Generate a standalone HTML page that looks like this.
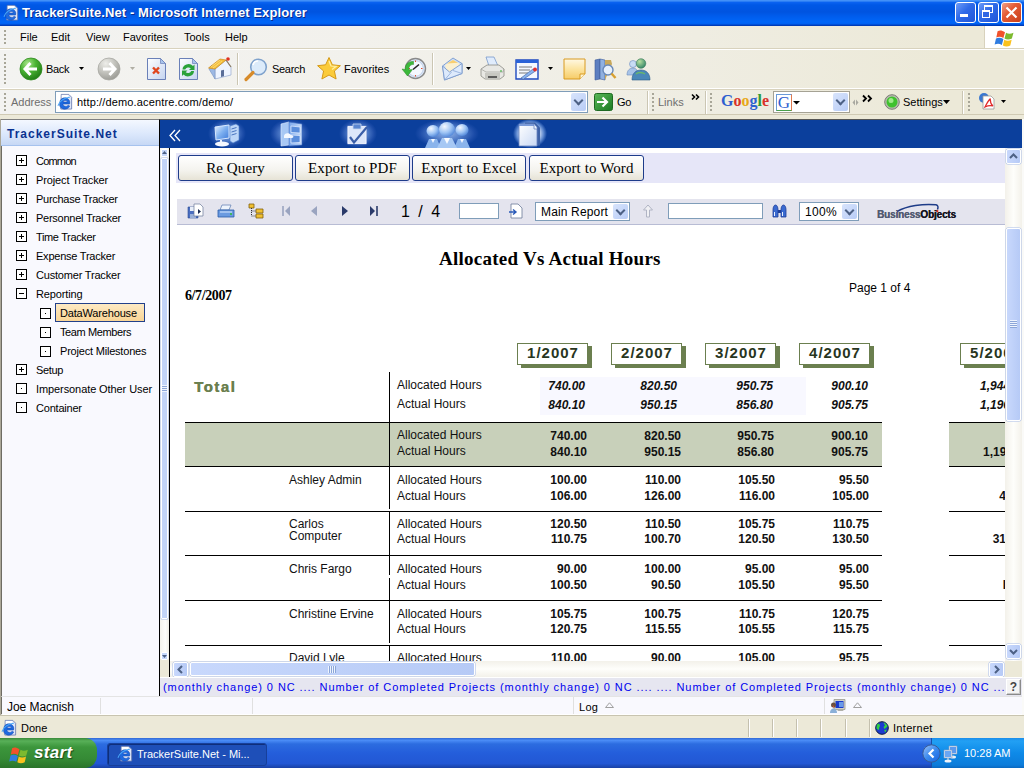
<!DOCTYPE html>
<html><head><meta charset="utf-8">
<style>
*{margin:0;padding:0;box-sizing:border-box}
html,body{width:1024px;height:768px;overflow:hidden;background:#ECE9D8;font-family:"Liberation Sans",sans-serif;font-size:11px;color:#000}
.a{position:absolute;white-space:nowrap}
svg.a{overflow:visible}
.t11{font-size:11px;line-height:13px}
#title{left:0;top:0;width:1024px;height:26px;background:linear-gradient(#4A96FA 0px,#3A8AF6 1px,#0A62F0 2.5px,#0058E6 5px,#0054E0 12px,#005CEC 16px,#0066F8 22px,#0060F0 24px,#0040C0 25px,#0038B0 26px)}
.xpb{width:21px;height:21px;border:1px solid #fff;border-radius:3px;background:linear-gradient(135deg,#6E9CF8,#2F6AE8 45%,#1F55D8)}
#menu{left:0;top:26px;width:1024px;height:23px;background:linear-gradient(90deg,#F3F3F1 0%,#F2F1EC 35%,#EFEDE2 68%,#ECE9D8 92%);border-bottom:1px solid #D8D2BD}
#tools{left:0;top:49px;width:1024px;height:40px;background:linear-gradient(90deg,#F3F3F1 0%,#F2F1EC 35%,#EFEDE2 68%,#ECE9D8 92%);border-top:1px solid #fff;border-bottom:1px solid #fff}
#addr{left:0;top:89px;width:1024px;height:26px;background:linear-gradient(90deg,#F3F3F1 0%,#F2F1EC 35%,#EFEDE2 68%,#ECE9D8 92%);border-top:1px solid #D8D2BD;border-bottom:1px solid #D0CAB4}
#leftp{left:0;top:119px;width:160px;height:578px;background:#F9F9FE;border-left:2px solid #6E6C64;box-shadow:inset 1px 0 0 #F9F9FE;border-top:1px solid #808080;border-right:1px solid #000}
#lhead{left:1px;top:120px;width:158px;height:26px;background:linear-gradient(#F4F8FF,#DCE8FC 55%,#C7D8F5);border-bottom:1px solid #A6C2EE}
#nav{left:160px;top:119px;width:862px;height:29px;background:#0B3F9C;border-top:1px solid #555}
#frame{left:160px;top:148px;width:862px;height:529px;background:#fff}
.grip{width:2px;background:repeating-linear-gradient(#A8A698 0 2px,transparent 2px 4px)}
.sep{width:2px;border-left:1px solid #CBC6B3;border-right:1px solid #fff}
.vsep{width:2px;height:18px;border-left:1px solid #C4C0AE;border-right:1px solid #fff}
.ddb{width:15px;height:18px;border-radius:2px;background:linear-gradient(135deg,#D8E4FC,#B8CCF6)}
.ddb:after{content:"";position:absolute;left:4px;top:50%;margin-top:-5px;width:5px;height:5px;border-right:2px solid #4D6185;border-bottom:2px solid #4D6185;transform:rotate(45deg)}
.tb{width:11px;height:11px;border:1px solid #000;background:#fff}
.tb.p:before{content:"";position:absolute;left:2px;top:4px;width:5px;height:1px;background:#000}
.tb.p:after{content:"";position:absolute;left:4px;top:2px;width:1px;height:5px;background:#000}
.tb.m:before{content:"";position:absolute;left:2px;top:4px;width:5px;height:1px;background:#000}
.tb.d:before{content:"";position:absolute;left:4px;top:4px;width:1px;height:1px;background:#000}
.glow{background:radial-gradient(closest-side,rgba(170,200,245,.85) 0%,rgba(110,150,220,.6) 55%,rgba(60,100,190,.35) 85%,rgba(11,63,158,0) 100%)}
.btn{height:26px;border:1px solid #1E3C8A;border-radius:3px;background:linear-gradient(#FFFFFF,#F4F3EE 60%,#E6E3D6);font-family:"Liberation Serif",serif;font-size:15px;line-height:24px;letter-spacing:.1px;text-align:center;color:#000}
.sbb{border-radius:2px;background:linear-gradient(90deg,#C8D8FC,#B6CAF6);border:1px solid #fff;box-shadow:0 0 0 .5px #A8BCE8}
.hb{width:71px;height:22px;background:#fff;border:1px solid #6B7F4F;font-weight:bold;font-size:15px;line-height:18px;text-align:center;letter-spacing:1px;text-indent:1px;color:#28361E}
.rl{font-size:12px;line-height:14px;color:#111}
.rv{width:80px;text-align:right;font-weight:bold;font-size:12px;line-height:14px;color:#111}
.it{font-style:italic}
</style></head><body>
<svg width="0" height="0" style="position:absolute"><defs>
<symbol id="ie" viewBox="0 0 18 18"><path d="M4.5 1.5h8l3 3v12.5h-11.5z" fill="#DDE6F8" stroke="#6A7CB0" stroke-width=".9"/><path d="M5 2h7v3H5z" fill="#fff"/><path d="M3 10.5a5.3 5 0 1 1 10.3 1.2H6.2a3 2.6 0 0 0 5.6 1.2l1.7.9A5.3 4.8 0 0 1 3 10.5zM6.3 9.6h4.8a2.5 2.2 0 0 0-4.8 0z" fill="#1E6AE0" stroke="#0E3FA8" stroke-width=".5"/><path d="M1 13.5C2.5 9 7 5.5 13.5 4.5" fill="none" stroke="#4AA8F8" stroke-width="1.1"/></symbol>
</defs></svg>
<!-- Title bar -->
<div class="a" id="title"></div>
<svg class="a" style="left:3px;top:4px" width="17" height="17"><use href="#ie"/></svg>
<div class="a" style="left:22px;top:5px;font-weight:bold;font-size:13px;letter-spacing:.1px;color:#fff;text-shadow:1px 1px 0 #0A2A8C">TrackerSuite.Net - Microsoft Internet Explorer</div>
<div class="a xpb" style="left:955px;top:2px"><div style="position:absolute;left:4px;top:11px;width:8px;height:3px;background:#fff"></div></div>
<div class="a xpb" style="left:978px;top:2px"><div style="position:absolute;left:5px;top:2px;width:9px;height:8px;border:1px solid #fff;border-top-width:2px"></div><div style="position:absolute;left:3px;top:7px;width:8px;height:8px;border:1px solid #fff;border-top-width:2px;background:#2F66E4"></div></div>
<div class="a xpb" style="left:1001px;top:2px;background:linear-gradient(135deg,#F0A088,#E45C36 40%,#C9401C)"><svg style="position:absolute;left:0;top:0" width="21" height="21"><path d="M4.5 4.5l10 10M14.5 4.5l-10 10" stroke="#fff" stroke-width="2.2"/></svg></div>

<!-- Menu -->
<div class="a" id="menu"></div>
<div class="a grip" style="left:4px;top:30px;height:16px"></div>
<div class="a t11" style="left:20px;top:31px">File</div>
<div class="a t11" style="left:51px;top:31px">Edit</div>
<div class="a t11" style="left:86px;top:31px">View</div>
<div class="a t11" style="left:123px;top:31px">Favorites</div>
<div class="a t11" style="left:184px;top:31px">Tools</div>
<div class="a t11" style="left:225px;top:31px">Help</div>
<div class="a" style="left:984px;top:26px;width:40px;height:22px;background:#fff;border-left:1px solid #D8D2BD"></div>
<svg class="a" style="left:995px;top:28px" width="20" height="18" viewBox="0 0 18 17"><path d="M2 3c2-1 4-1 7 1l-1.5 5.5C5 8 3 8 .8 9z" fill="#F1522B"/><path d="M10 4.5c2 1.3 4.5 1.3 7 0l-1.5 5.5c-2.4 1.2-4.8 1.2-7 0z" fill="#7DBA2F"/><path d="M.5 10c2-1 4.5-1 7 .5L6 16c-2.2-1.4-4.3-1.4-6.8-.4z" fill="#2F7CE0"/><path d="M8.3 11c2 1.3 4.5 1.3 7 0L14 16.5c-2.4 1.2-4.8 1.2-7 0z" fill="#FBC21E"/></svg>

<!-- Standard toolbar -->
<div class="a" id="tools"></div>
<div class="a grip" style="left:4px;top:54px;height:32px"></div>
<svg class="a" style="left:19px;top:57px" width="24" height="24" viewBox="0 0 24 24"><defs><radialGradient id="gb" cx="35%" cy="25%" r="80%"><stop offset="0" stop-color="#A8E48A"/><stop offset=".45" stop-color="#4CB534"/><stop offset="1" stop-color="#1F7A14"/></radialGradient></defs><circle cx="12" cy="12" r="11" fill="url(#gb)" stroke="#2E8A1E" stroke-width=".8"/><path d="M11.5 6L6 12l5.5 6M6.5 12H18" fill="none" stroke="#fff" stroke-width="3" stroke-linejoin="miter"/></svg>
<div class="a t11" style="left:46px;top:63px;letter-spacing:-.3px">Back</div>
<svg class="a" style="left:79px;top:67px" width="6" height="4"><path d="M0 0h5L2.5 3z" fill="#000"/></svg>
<svg class="a" style="left:97px;top:57px" width="24" height="24" viewBox="0 0 24 24"><defs><radialGradient id="gg" cx="35%" cy="25%" r="80%"><stop offset="0" stop-color="#EEEEEA"/><stop offset=".5" stop-color="#C4C4BE"/><stop offset="1" stop-color="#9A9A94"/></radialGradient></defs><circle cx="12" cy="12" r="11" fill="url(#gg)" stroke="#A8A8A2" stroke-width=".8"/><path d="M12.5 6L18 12l-5.5 6M17.5 12H6" fill="none" stroke="#fff" stroke-width="3"/></svg>
<svg class="a" style="left:130px;top:67px" width="6" height="4"><path d="M0 0h5L2.5 3z" fill="#B0AEA4"/></svg>
<svg class="a" style="left:146px;top:57px" width="21" height="24" viewBox="0 0 21 24"><defs><linearGradient id="pg" x1="0" y1="0" x2="1" y2="1"><stop offset="0" stop-color="#FFFFFF"/><stop offset="1" stop-color="#C4D4F0"/></linearGradient></defs><path d="M1.5 1.5h13l5 5v16h-18z" fill="url(#pg)" stroke="#6A80B8"/><path d="M14.5 1.5v5h5z" fill="#A8C4EC" stroke="#6A80B8" stroke-width=".7"/><path d="M7 10.5l6 6M13 10.5l-6 6" stroke="#E0461E" stroke-width="2.4"/></svg>
<svg class="a" style="left:178px;top:57px" width="21" height="24" viewBox="0 0 21 24"><path d="M1.5 1.5h13l5 5v16h-18z" fill="url(#pg)" stroke="#6A80B8"/><path d="M14.5 1.5v5h5z" fill="#A8C4EC" stroke="#6A80B8" stroke-width=".7"/><path d="M4.5 12.5a6 5.5 0 0 1 10.5-3.5l1.5-1.5v5.5h-5.5l1.8-1.8a3.5 3.2 0 0 0-5.6 1.3z" fill="#2AA23A"/><path d="M16 14a6 5.5 0 0 1-10.5 3.5L4 19v-5.5h5.5l-1.8 1.8a3.5 3.2 0 0 0 5.6-1.3z" fill="#2AA23A"/></svg>
<svg class="a" style="left:208px;top:56px" width="25" height="25" viewBox="0 0 25 25"><path d="M1 13l6 10 16-4v-8l-5-7z" fill="#C8D8F4"/><path d="M7 23V13l11-9 5 7v8z" fill="#EEF4FF" stroke="#8AA0C8" stroke-width=".6"/><path d="M1 13l6 10V13L4 9z" fill="#9CB8E4" stroke="#7A94C0" stroke-width=".6"/><path d="M0.5 12L12 3l6 1L7 13z" fill="#F4C040" stroke="#D08A18" stroke-width=".7"/><path d="M3 11l9-7M5 12l9-7" stroke="#FFE48A" stroke-width=".7"/><path d="M18 4l5 7" stroke="#8A7A60" stroke-width="1.2"/><path d="M13 14.5l3-.8v6.5l-3 .8z" fill="#5A6E98"/><circle cx="20" cy="3" r="1.8" fill="#E0301E"/></svg>
<div class="a sep" style="left:237px;top:53px;height:32px"></div>
<svg class="a" style="left:244px;top:57px" width="25" height="25" viewBox="0 0 25 25"><circle cx="14.5" cy="10" r="7.8" fill="#DCEBFA" stroke="#7FA2CC" stroke-width="1.6"/><path d="M9 8a5 5 0 0 1 5-4" stroke="#fff" stroke-width="1.5" fill="none"/><path d="M9 15.5l-7 7" stroke="#D78B2A" stroke-width="3.2" stroke-linecap="round"/></svg>
<div class="a t11" style="left:272px;top:63px;letter-spacing:-.3px">Search</div>
<svg class="a" style="left:316px;top:56px" width="26" height="25" viewBox="0 0 26 25"><path d="M13 1.5l3.4 7.3 8 .9-6 5.3 1.7 8L13 19l-7.1 4 1.7-8-6-5.3 8-.9z" fill="#FBCB3A" stroke="#D69A18" stroke-width="1"/><path d="M13 5l2 5 5 .5-4 3" fill="none" stroke="#FFF1A8" stroke-width="1.2"/></svg>
<div class="a t11" style="left:344px;top:63px">Favorites</div>
<svg class="a" style="left:401px;top:57px" width="26" height="24" viewBox="0 0 26 24"><circle cx="14.5" cy="11.5" r="10" fill="#DCE8FA" stroke="#8A8A8A" stroke-width="1.4"/><circle cx="14.5" cy="11.5" r="7.8" fill="#F4F8FF" stroke="#B8C8E0" stroke-width=".8"/><path d="M14.5 3.5v1.5M14.5 18v1.5M21.5 11.5H20M9 11.5H7.5" stroke="#E05030" stroke-width="1"/><path d="M12 12.5l6-5" stroke="#222" stroke-width="1.6"/><path d="M12.5 4.5C7 4 3.5 8 4.5 12.5L1 12l5.5 7 5-6.5-3.5.3C7.5 9.5 9.5 7.5 12.5 7.5z" fill="#3CB83A" stroke="#2A8A2A" stroke-width=".5"/></svg>
<div class="a sep" style="left:432px;top:53px;height:32px"></div>
<svg class="a" style="left:441px;top:57px" width="24" height="24" viewBox="0 0 24 24"><path d="M1.5 9L12 1l9 5.5v10L3.5 23z" fill="#C8DCF8" stroke="#7A9ACC" stroke-width=".9"/><path d="M4 8l8-5 7 4-2 6-11 4z" fill="#FBF0D0"/><path d="M6 6.5l6-3.5 5 2.8" fill="#F8CE70"/><path d="M1.5 9l7 6 12.5-8.5v10L3.5 23z" fill="#DDEAFC" stroke="#7A9ACC" stroke-width=".9"/><path d="M3.5 23l7-8M21 16.5l-9-3" stroke="#8AA8D8" stroke-width=".8"/></svg>
<svg class="a" style="left:466px;top:67px" width="6" height="4"><path d="M0 0h5L2.5 3z" fill="#000"/></svg>
<svg class="a" style="left:480px;top:56px" width="25" height="25" viewBox="0 0 25 25"><path d="M6 1h8l4 9H9z" fill="#E0ECFC" stroke="#7A9ACC" stroke-width=".8"/><path d="M1 13l6-4h12l5 4v7l-4 3H5l-4-3z" fill="#E8E8E4" stroke="#8A8A84" stroke-width=".8"/><path d="M1 13l5 3h17l1-3" fill="none" stroke="#A8A8A2" stroke-width=".8"/><path d="M5 17h15v5H5z" fill="#C8C8C2"/><path d="M8 21h9" stroke="#3A3A3A" stroke-width="1.5"/><path d="M20 15h2" stroke="#30B030" stroke-width="1.2"/></svg>
<svg class="a" style="left:515px;top:59px" width="24" height="21" viewBox="0 0 24 21"><path d="M1 1h22v19H1z" fill="#F4F8FF" stroke="#1E4AC0" stroke-width="1.4"/><path d="M1 1h22v3H1z" fill="#2A62D8"/><path d="M4 8h13M4 11h11M4 14h9" stroke="#7A7A7A"/><path d="M6 19l12-9 2.2 2.2-12 8.2z" fill="#8AB4F0" stroke="#3A5A98" stroke-width=".6"/><circle cx="20" cy="10.5" r="2" fill="#E03030"/></svg>
<svg class="a" style="left:548px;top:67px" width="6" height="4"><path d="M0 0h5L2.5 3z" fill="#000"/></svg>
<svg class="a" style="left:563px;top:58px" width="23" height="22" viewBox="0 0 23 22"><defs><linearGradient id="nt" x1="0" y1="0" x2="0" y2="1"><stop offset="0" stop-color="#FFF8E4"/><stop offset=".5" stop-color="#FCE4A0"/><stop offset="1" stop-color="#F6CC68"/></linearGradient></defs><path d="M1 1h21v15l-5 5H1z" fill="url(#nt)" stroke="#D89A20"/><path d="M17 21v-5h5" fill="#FFF4D0" stroke="#D89A20"/></svg>
<svg class="a" style="left:593px;top:57px" width="24" height="24" viewBox="0 0 24 24"><path d="M2 3l5-1v20l-5 1z" fill="#5D7FC0" stroke="#3C5A98" stroke-width=".6"/><path d="M7 2l5 1v20l-5-1z" fill="#8FB0E0" stroke="#3C5A98" stroke-width=".6"/><path d="M12 3h6l1 4-7 16z" fill="#C8A85A"/><circle cx="15" cy="13" r="5" fill="#E6F0FC" stroke="#6888B8" stroke-width="1.4"/><path d="M18.5 16.5l4 4.5" stroke="#D8A030" stroke-width="2.4"/></svg>
<svg class="a" style="left:626px;top:57px" width="25" height="24" viewBox="0 0 25 24"><defs><radialGradient id="mh" cx="35%" cy="30%" r="70%"><stop offset="0" stop-color="#B8E0A0"/><stop offset="1" stop-color="#3A8A6A"/></radialGradient></defs><circle cx="7" cy="7" r="3.5" fill="#C8DCF4" stroke="#6A8ABC" stroke-width=".6"/><path d="M1 18c0-5 3-7 6-7s5 2 5 7z" fill="#A8C4E8" stroke="#6A8ABC" stroke-width=".6"/><circle cx="15" cy="6.5" r="4.8" fill="url(#mh)" stroke="#3A7A5A" stroke-width=".6"/><path d="M6 23c0-7 4-10 9-10s9 3 9 10z" fill="#4A88B8" stroke="#2A5A88" stroke-width=".6"/><path d="M10 17c2-2 6-2 9 0" stroke="#6AB86A" stroke-width="1.5" fill="none"/></svg>

<!-- Address bar -->
<div class="a" id="addr"></div>
<div class="a grip" style="left:4px;top:93px;height:18px"></div>
<div class="a t11" style="left:11px;top:96px;color:#6E6E6E">Address</div>
<div class="a" style="left:55px;top:91px;width:533px;height:22px;background:#fff;border:1px solid #7F9DB9"></div>
<svg class="a" style="left:57px;top:93px" width="17" height="17"><use href="#ie"/></svg>
<div class="a t11" style="left:77px;top:96px;letter-spacing:.14px">http://demo.acentre.com/demo/</div>
<div class="a ddb" style="left:571px;top:93px"></div>
<svg class="a" style="left:594px;top:93px" width="19" height="18" viewBox="0 0 19 18"><defs><linearGradient id="go" x1="0" y1="0" x2="1" y2="1"><stop offset="0" stop-color="#5AB85A"/><stop offset="1" stop-color="#1A7A22"/></linearGradient></defs><rect x=".5" y=".5" width="18" height="17" rx="2" fill="url(#go)" stroke="#1E6A22"/><path d="M3 9h9M8.5 4.5L13 9l-4.5 4.5" stroke="#fff" stroke-width="2.2" fill="none"/></svg>
<div class="a t11" style="left:617px;top:96px;letter-spacing:-.3px">Go</div>
<div class="a sep" style="left:647px;top:91px;height:23px"></div>
<div class="a grip" style="left:652px;top:93px;height:18px"></div>
<div class="a t11" style="left:658px;top:96px;color:#6E6E6E">Links</div>
<svg class="a" style="left:691px;top:94px" width="9" height="6" viewBox="0 0 9 6"><path d="M1 .5L3.5 3 1 5.5M5 .5L7.5 3 5 5.5" fill="none" stroke="#000" stroke-width="1.6"/></svg>
<div class="a sep" style="left:705px;top:91px;height:23px"></div>
<div class="a grip" style="left:710px;top:93px;height:18px"></div>
<div class="a" style="left:721px;top:92px;font-family:'Liberation Serif',serif;font-weight:bold;font-size:16px;line-height:18px;letter-spacing:0"><span style="color:#2F5FD0">G</span><span style="color:#D8322A">o</span><span style="color:#E8A818">o</span><span style="color:#2F5FD0">g</span><span style="color:#2C9A3A">l</span><span style="color:#D8322A">e</span></div>
<div class="a" style="left:773px;top:91px;width:77px;height:22px;background:#fff;border:1px solid #A5A294"></div>
<div class="a" style="left:776px;top:94px;width:16px;height:17px;border:1px solid #6A9AD8;border-bottom-color:#4AA04A;border-right-color:#E07A50;font-family:'Liberation Serif',serif;font-size:17px;line-height:16px;color:#2F5FD0;text-align:center">G</div>
<svg class="a" style="left:793px;top:101px" width="8" height="4"><path d="M0 0h7L3.5 3.5z" fill="#000"/></svg>
<div class="a ddb" style="left:833px;top:93px"></div>
<svg class="a" style="left:852px;top:99px" width="7" height="7" viewBox="0 0 7 7"><path d="M3 0.5L0.5 3.5 3 6.5zM4 0.5l2.5 3L4 6.5z" fill="#A8A8A0"/></svg>
<svg class="a" style="left:862px;top:95px" width="11" height="7" viewBox="0 0 11 7"><path d="M1 .5L4 3.5 1 6.5M6 .5L9 3.5 6 6.5" fill="none" stroke="#000" stroke-width="1.8"/></svg>
<svg class="a" style="left:884px;top:94px" width="16" height="16" viewBox="0 0 16 16"><circle cx="8" cy="8" r="7.3" fill="#B8BAB0" stroke="#7C7E74"/><circle cx="8" cy="8" r="5.5" fill="#3FC12E"/><circle cx="7" cy="6.5" r="2.5" fill="#9FE88A"/></svg>
<div class="a t11" style="left:903px;top:96px">Settings</div>
<svg class="a" style="left:943px;top:100px" width="8" height="5"><path d="M0 0h7L3.5 4z" fill="#000"/></svg>
<div class="a sep" style="left:962px;top:91px;height:23px"></div>
<div class="a grip" style="left:968px;top:93px;height:18px"></div>
<svg class="a" style="left:978px;top:92px" width="18" height="18" viewBox="0 0 18 18"><circle cx="6" cy="6" r="5" fill="#3A78D0"/><path d="M5 4h8l3 3v10H5z" fill="#fff" stroke="#9A9A9A" stroke-width=".8"/><path d="M7 15c2-4 4-7 5-8s-1 4 3 7c-3-1-6 0-8 1z" fill="none" stroke="#E02828" stroke-width="1.2"/></svg>
<svg class="a" style="left:1001px;top:100px" width="6" height="4"><path d="M0 0h5L2.5 3z" fill="#000"/></svg>

<!-- Left panel -->
<div class="a" id="leftp"></div><div class="a" style="left:0;top:119px;width:1px;height:596px;background:#ACA899"></div>
<div class="a" id="lhead"></div>
<div class="a" style="left:7px;top:127px;font-weight:bold;font-size:12px;line-height:14px;letter-spacing:1px;color:#0A3290">TrackerSuite.Net</div>
<div class="a tb p" style="left:16px;top:155px"></div><div class="a t11" style="left:36px;top:155px;letter-spacing:-0.8px">Common</div>
<div class="a tb p" style="left:16px;top:174px"></div><div class="a t11" style="left:36px;top:174px;letter-spacing:-0.12px">Project Tracker</div>
<div class="a tb p" style="left:16px;top:193px"></div><div class="a t11" style="left:36px;top:193px;letter-spacing:-0.28px">Purchase Tracker</div>
<div class="a tb p" style="left:16px;top:212px"></div><div class="a t11" style="left:36px;top:212px;letter-spacing:-0.25px">Personnel Tracker</div>
<div class="a tb p" style="left:16px;top:231px"></div><div class="a t11" style="left:36px;top:231px;letter-spacing:-0.35px">Time Tracker</div>
<div class="a tb p" style="left:16px;top:250px"></div><div class="a t11" style="left:36px;top:250px;letter-spacing:-0.23px">Expense Tracker</div>
<div class="a tb p" style="left:16px;top:269px"></div><div class="a t11" style="left:36px;top:269px;letter-spacing:-0.19px">Customer Tracker</div>
<div class="a tb m" style="left:16px;top:288px"></div><div class="a t11" style="left:36px;top:288px;letter-spacing:-0.14px">Reporting</div>
<div class="a tb d" style="left:40px;top:308px"></div><div class="a" style="left:55px;top:303px;width:90px;height:19px;background:linear-gradient(#FDEAC4,#F9D596);border:1px solid #22408A"></div><div class="a t11" style="left:60px;top:307px;letter-spacing:-0.17px">DataWarehouse</div>
<div class="a tb d" style="left:40px;top:327px"></div><div class="a t11" style="left:60px;top:326px;letter-spacing:-0.4px">Team Members</div>
<div class="a tb d" style="left:40px;top:346px"></div><div class="a t11" style="left:60px;top:345px;letter-spacing:-0.2px">Project Milestones</div>
<div class="a tb p" style="left:16px;top:364px"></div><div class="a t11" style="left:36px;top:364px;letter-spacing:-0.34px">Setup</div>
<div class="a tb d" style="left:16px;top:383px"></div><div class="a t11" style="left:36px;top:383px;letter-spacing:-0.09px">Impersonate Other User</div>
<div class="a tb d" style="left:16px;top:402px"></div><div class="a t11" style="left:36px;top:402px;letter-spacing:-0.21px">Container</div>

<!-- Nav bar -->
<div class="a" id="nav"></div>
<div class="a glow" style="left:208px;top:119px;width:38px;height:29px"></div>
<div class="a glow" style="left:270px;top:119px;width:40px;height:29px"></div>
<div class="a glow" style="left:339px;top:119px;width:38px;height:29px"></div>
<div class="a glow" style="left:415px;top:119px;width:64px;height:29px"></div>
<div class="a glow" style="left:513px;top:119px;width:34px;height:29px;background:radial-gradient(closest-side,#fff 0%,#E0EAFA 50%,rgba(120,160,225,.75) 80%,rgba(11,63,158,0) 100%)"></div>
<svg class="a" style="left:169px;top:129px" width="13" height="13" viewBox="0 0 13 13"><path d="M6 1L1 6.5 6 12M11 1L6 6.5 11 12" fill="none" stroke="#fff" stroke-width="1.3"/></svg>
<svg class="a" style="left:213px;top:122px" width="27" height="25" viewBox="0 0 27 25"><defs><linearGradient id="mon" x1="0" y1="0" x2="1" y2="1"><stop offset="0" stop-color="#E8F2FF"/><stop offset=".5" stop-color="#7EB0F0"/><stop offset="1" stop-color="#3C78D8"/></linearGradient></defs><path d="M17 4l6-2 3 2v14l-6 3-3-2z" fill="#BCD6F8" stroke="#4A7CC8" stroke-width=".6"/><path d="M18.5 7l5-1.5M18.5 10l5-1.5M18.5 13l5-1.5" stroke="#2A5AB0" stroke-width=".8"/><path d="M2 5l14-2v13L3 18z" fill="url(#mon)" stroke="#D8E8FF" stroke-width="1"/><path d="M8 18v2" stroke="#E8F0FF" stroke-width="2"/><ellipse cx="9" cy="22" rx="7" ry="2.5" fill="#F4F8FF"/></svg>
<svg class="a" style="left:279px;top:121px" width="25" height="26" viewBox="0 0 25 26"><defs><linearGradient id="cab" x1="0" y1="0" x2="1" y2="0"><stop offset="0" stop-color="#7AA8EC"/><stop offset="1" stop-color="#C8DCF8"/></linearGradient></defs><path d="M2 3l8-2v23l-8 1z" fill="#A8C8F4" stroke="#E0ECFF" stroke-width=".6"/><path d="M10 1l13 2v21l-13 1z" fill="url(#cab)" stroke="#3A6AC0" stroke-width=".6"/><path d="M12 5l9 1v6l-9-.5zM12 14l9 .5v7l-9 .5z" fill="#5A8EDC" stroke="#E8F0FF" stroke-width=".7"/><path d="M5 15c0-3 5-4 7-1 3 0 3 3 1 3H5z" fill="#F4F8FF"/></svg>
<svg class="a" style="left:346px;top:123px" width="23" height="22" viewBox="0 0 23 22"><path d="M1.5 3h19v18h-19z" fill="#DCE6FA" stroke="#6A88C8" stroke-width=".8"/><path d="M2 3.5h18v17H2z" fill="none" stroke="#F4F8FF" stroke-width=".8"/><path d="M7 1h8v5H7z" fill="#5A86D0" stroke="#C8D8F0" stroke-width=".8"/><path d="M4 14l4 5.5L21 4" fill="none" stroke="#3A5EA8" stroke-width="2.2"/></svg>
<svg class="a" style="left:424px;top:121px" width="48" height="27" viewBox="0 0 48 27"><defs><radialGradient id="hd" cx="35%" cy="30%" r="70%"><stop offset="0" stop-color="#F4F8FF"/><stop offset=".6" stop-color="#9EC4F4"/><stop offset="1" stop-color="#5A8EDC"/></radialGradient></defs><ellipse cx="9" cy="10" rx="6.5" ry="6" fill="url(#hd)"/><ellipse cx="38" cy="9" rx="6.5" ry="6" fill="url(#hd)"/><path d="M1 27l4-9h8l4 9zM30 27l4-9h8l4 9z" fill="#8AB4EC"/><path d="M7 18l2 4 2-4M36 18l2 4 2-4" fill="#F4F8FF"/><ellipse cx="23" cy="8.5" rx="8" ry="7.5" fill="url(#hd)"/><path d="M13 27l5-10h10l5 10z" fill="#A6C8F4"/><path d="M20 17l3 6 3-6z" fill="#F8FBFF"/></svg>
<svg class="a" style="left:517px;top:121px" width="25" height="26" viewBox="0 0 25 26"><defs><linearGradient id="dc" x1="0" y1="0" x2="1" y2="1"><stop offset="0" stop-color="#FFFFFF"/><stop offset="1" stop-color="#C8D8F4"/></linearGradient></defs><path d="M8 1.5h10l5 5v18H8z" fill="#3E62A8"/><path d="M2 3h15l3 3v19H2z" fill="url(#dc)" stroke="#6A86C0" stroke-width=".8"/><path d="M2 3h15v2H2z" fill="#7A9AD8"/><path d="M17 3v5h3" fill="#E8F0FF" stroke="#6A86C0" stroke-width=".8"/></svg>

<!-- right frame -->
<div class="a" id="frame"></div>
<!-- narrow left scrollbar -->
<div class="a" style="left:160px;top:148px;width:9px;height:529px;background:linear-gradient(90deg,#F4F3EC,#FDFDFA 60%,#F0EFE6)"></div>
<div class="a" style="left:160px;top:659px;width:9px;height:18px;background:#ECE9D8"></div>
<div class="a" style="left:169px;top:148px;width:1px;height:529px;background:#000"></div>
<div class="a" style="left:161px;top:149px;width:7px;height:8px;background:#C6D8FA;border:1px solid #fff;border-radius:1px"></div>
<svg class="a" style="left:162px;top:151px" width="5" height="4"><path d="M0 3h5L2.5 0z" fill="#4D6185"/></svg>
<div class="a" style="left:161px;top:158px;width:7px;height:461px;background:#C2D4F8;border:1px solid #fff;border-radius:1px;box-shadow:0 0 0 .5px #A8BCE8"></div>
<div class="a" style="left:162px;top:385px;width:5px;height:7px;background:repeating-linear-gradient(#EEF4FE 0 1px,#8CA6D8 1px 2px)"></div>
<div class="a" style="left:161px;top:652px;width:7px;height:8px;background:#C6D8FA;border:1px solid #fff;border-radius:1px"></div>
<svg class="a" style="left:162px;top:655px" width="5" height="4"><path d="M0 0h5L2.5 3z" fill="#4D6185"/></svg>

<!-- buttons band -->
<div class="a" style="left:176px;top:153px;width:829px;height:30px;background:#E6E6F8"></div>
<div class="a btn" style="left:178px;top:155px;width:115px">Re Query</div>
<div class="a btn" style="left:295px;top:155px;width:115px">Export to PDF</div>
<div class="a btn" style="left:412px;top:155px;width:114px">Export to Excel</div>
<div class="a btn" style="left:529px;top:155px;width:115px">Export to Word</div>

<!-- report toolbar -->
<div class="a" style="left:177px;top:199px;width:828px;height:26px;background:#E4E4EE;border-bottom:1px solid #B8BCD4"></div>
<svg class="a" style="left:187px;top:203px" width="17" height="16" viewBox="0 0 17 16"><path d="M1 4h10v11H1z" fill="#4A6EC0" stroke="#2A4A90" stroke-width=".6"/><path d="M3 4h6v4H3z" fill="#E8EEF8"/><path d="M3 11h6v4H3z" fill="#9AB0D8"/><path d="M7 1h6l3 3v9H7z" fill="#fff" stroke="#6A7A98" stroke-width=".7"/><path d="M11 6l3 2.5-3 2.5z" fill="#1A2A50"/></svg>
<svg class="a" style="left:217px;top:204px" width="18" height="14" viewBox="0 0 18 14"><path d="M5 1h9l-2 5H3z" fill="#EEF4FC" stroke="#6A86B8" stroke-width=".8"/><path d="M1 6h16v7H1z" fill="#6A9AE0" stroke="#2A5AA8" stroke-width=".8"/><path d="M3 8h12" stroke="#D8E8FF"/><circle cx="14" cy="10" r="1" fill="#30C030"/></svg>
<svg class="a" style="left:248px;top:203px" width="16" height="16" viewBox="0 0 16 16"><path d="M1 1h5v4H1z" fill="#F0C030" stroke="#806010" stroke-width=".8"/><path d="M8 6h7v4H8zM8 11h7v4H8z" fill="#F0C030" stroke="#806010" stroke-width=".8"/><path d="M3.5 5v8h4.5M3.5 8h4.5" fill="none" stroke="#333" stroke-dasharray="1 1"/></svg>
<svg class="a" style="left:282px;top:206px" width="8" height="10"><path d="M1 0v10" stroke="#9AA4C0" stroke-width="1.6"/><path d="M8 0v10L3 5z" fill="#9AA4C0"/></svg>
<svg class="a" style="left:311px;top:206px" width="6" height="10"><path d="M6 0v10L0 5z" fill="#9AA4C0"/></svg>
<svg class="a" style="left:342px;top:206px" width="6" height="10"><path d="M0 0v10l6-5z" fill="#2A3A6A"/></svg>
<svg class="a" style="left:370px;top:206px" width="8" height="10"><path d="M0 0v10l5-5z" fill="#2A3A6A"/><path d="M7 0v10" stroke="#2A3A6A" stroke-width="1.6"/></svg>
<div class="a" style="left:401px;top:203px;font-size:16px;line-height:18px;word-spacing:4px">1 / 4</div>
<div class="a" style="left:459px;top:203px;width:40px;height:16px;background:#fff;border:1px solid #7F9DB9"></div>
<svg class="a" style="left:508px;top:203px" width="15" height="16" viewBox="0 0 15 16"><path d="M3 1h7l4 4v10H3z" fill="#fff" stroke="#6A7A98" stroke-width=".8"/><path d="M1 9h6M5 6.5L8 9l-3 2.5" stroke="#2A5AB8" stroke-width="1.4" fill="none"/></svg>
<div class="a" style="left:535px;top:202px;width:95px;height:19px;background:#fff;border:1px solid #7F9DB9"></div>
<div class="a" style="left:541px;top:205px;font-size:12px;line-height:15px;letter-spacing:.15px">Main Report</div>
<div class="a ddb" style="left:613px;top:204px;height:15px"></div>
<svg class="a" style="left:642px;top:204px" width="12" height="14" viewBox="0 0 12 14"><path d="M6 1L1.5 6h3v7h3V6h3z" fill="#F0F0F4" stroke="#B0B4C4"/></svg>
<div class="a" style="left:668px;top:203px;width:95px;height:16px;background:#fff;border:1px solid #7F9DB9"></div>
<svg class="a" style="left:772px;top:204px" width="15" height="14" viewBox="0 0 15 14"><path d="M1 13V6c0-3 1-5 2.5-5S6 3 6 6v7zM9 13V6c0-3 1-5 2.5-5S14 3 14 6v7z" fill="#3A6AD0" stroke="#1E3E98" stroke-width=".8"/><path d="M6 6h3v3H6z" fill="#1E3E98"/><path d="M2.5 8v4M10.5 8v4" stroke="#E8F0FF" stroke-width="1"/></svg>
<div class="a" style="left:799px;top:202px;width:60px;height:19px;background:#fff;border:1px solid #7F9DB9"></div>
<div class="a" style="left:805px;top:205px;font-size:12px;line-height:15px;letter-spacing:.3px">100%</div>
<div class="a ddb" style="left:842px;top:204px;height:15px"></div>
<svg class="a" style="left:895px;top:203px" width="45" height="10" viewBox="0 0 45 10"><path d="M2 8.5C12 3 28 .5 41 1.8C43 2.3 43.5 4 42.5 6.5" fill="none" stroke="#1E3C88" stroke-width="1.5"/><circle cx="42.2" cy="8" r="1.2" fill="#D83020"/></svg>
<div class="a" style="left:877px;top:209px;font-weight:bold;font-size:10px;line-height:12px;color:#525A72;letter-spacing:-.15px;text-shadow:.3px 0 0 currentColor">Business<span style="color:#141420">Objects</span></div>

<!-- report header text -->
<div class="a" style="left:439px;top:248px;font-family:'Liberation Serif',serif;font-weight:bold;font-size:19px;line-height:22px;letter-spacing:.25px">Allocated Vs Actual Hours</div>
<div class="a" style="left:185px;top:288px;font-family:'Liberation Serif',serif;font-weight:bold;font-size:14px;line-height:16px;letter-spacing:-.4px">6/7/2007</div>
<div class="a" style="left:849px;top:281px;font-size:12px;line-height:14px">Page 1 of 4</div>

<div class="a" style="left:521px;top:346px;width:71px;height:22px;background:#6B7F4F"></div>
<div class="a hb" style="left:517px;top:343px">1/2007</div>
<div class="a" style="left:615px;top:346px;width:71px;height:22px;background:#6B7F4F"></div>
<div class="a hb" style="left:611px;top:343px">2/2007</div>
<div class="a" style="left:709px;top:346px;width:71px;height:22px;background:#6B7F4F"></div>
<div class="a hb" style="left:705px;top:343px">3/2007</div>
<div class="a" style="left:803px;top:346px;width:71px;height:22px;background:#6B7F4F"></div>
<div class="a hb" style="left:799px;top:343px">4/2007</div>
<div class="a" style="left:964px;top:346px;width:71px;height:22px;background:#6B7F4F"></div>
<div class="a hb" style="left:960px;top:343px">5/2007</div>
<div class="a" style="left:194px;top:378px;font-weight:bold;font-size:15px;letter-spacing:1.5px;color:#6B7F4F;text-shadow:.4px 0 0 #6B7F4F">Total</div>
<div class="a" style="left:540px;top:377px;width:266px;height:38px;background:#F8F8FF"></div>
<div class="a rl" style="left:397px;top:378px">Allocated Hours</div>
<div class="a rl" style="left:397px;top:397px">Actual Hours</div>
<div class="a rv it" style="left:505px;top:379px">740.00</div>
<div class="a rv it" style="left:505px;top:398px">840.10</div>
<div class="a rv it" style="left:597px;top:379px">820.50</div>
<div class="a rv it" style="left:597px;top:398px">950.15</div>
<div class="a rv it" style="left:693px;top:379px">950.75</div>
<div class="a rv it" style="left:693px;top:398px">856.80</div>
<div class="a rv it" style="left:788px;top:379px">900.10</div>
<div class="a rv it" style="left:788px;top:398px">905.75</div>
<div class="a rv it" style="left:980px;top:379px;width:auto;text-align:left">1,944.00</div>
<div class="a rv it" style="left:980px;top:398px;width:auto;text-align:left">1,196.00</div>
<div class="a" style="left:185px;top:422px;width:697px;height:45px;background:#C8D0BA;border-top:1px solid #000;border-bottom:1px solid #000"></div>
<div class="a" style="left:949px;top:422px;width:60px;height:45px;background:#C8D0BA;border-top:1px solid #000;border-bottom:1px solid #000"></div>
<div class="a rl" style="left:397px;top:428px">Allocated Hours</div>
<div class="a rl" style="left:397px;top:444px">Actual Hours</div>
<div class="a rv" style="left:507px;top:429px">740.00</div>
<div class="a rv" style="left:507px;top:445px">840.10</div>
<div class="a rv" style="left:601px;top:429px">820.50</div>
<div class="a rv" style="left:601px;top:445px">950.15</div>
<div class="a rv" style="left:694px;top:429px">950.75</div>
<div class="a rv" style="left:694px;top:445px">856.80</div>
<div class="a rv" style="left:788px;top:429px">900.10</div>
<div class="a rv" style="left:788px;top:445px">905.75</div>
<div class="a rv" style="left:983px;top:445px;width:auto;text-align:left">1,196.00</div>
<div class="a rl" style="left:289px;top:473px">Ashley Admin</div>
<div class="a rl" style="left:397px;top:473px">Allocated Hours</div>
<div class="a rl" style="left:397px;top:489px">Actual Hours</div>
<div class="a rv" style="left:507px;top:473px">100.00</div>
<div class="a rv" style="left:507px;top:489px">106.00</div>
<div class="a rv" style="left:601px;top:473px">110.00</div>
<div class="a rv" style="left:601px;top:489px">126.00</div>
<div class="a rv" style="left:695px;top:473px">105.50</div>
<div class="a rv" style="left:695px;top:489px">116.00</div>
<div class="a rv" style="left:789px;top:473px">95.50</div>
<div class="a rv" style="left:789px;top:489px">105.00</div>
<div class="a rv" style="left:926px;top:489px">4</div>
<div class="a rl" style="left:289px;top:517px">Carlos</div>
<div class="a rl" style="left:289px;top:529px">Computer</div>
<div class="a rl" style="left:397px;top:517px">Allocated Hours</div>
<div class="a rl" style="left:397px;top:532px">Actual Hours</div>
<div class="a rv" style="left:507px;top:517px">120.50</div>
<div class="a rv" style="left:507px;top:532px">110.75</div>
<div class="a rv" style="left:601px;top:517px">110.50</div>
<div class="a rv" style="left:601px;top:532px">100.70</div>
<div class="a rv" style="left:695px;top:517px">105.75</div>
<div class="a rv" style="left:695px;top:532px">120.50</div>
<div class="a rv" style="left:789px;top:517px">110.75</div>
<div class="a rv" style="left:789px;top:532px">130.50</div>
<div class="a rv" style="left:926px;top:532px">31</div>
<div class="a" style="left:185px;top:511px;width:697px;height:1px;background:#000"></div>
<div class="a" style="left:949px;top:511px;width:60px;height:1px;background:#000"></div>
<div class="a rl" style="left:289px;top:562px">Chris Fargo</div>
<div class="a rl" style="left:397px;top:562px">Allocated Hours</div>
<div class="a rl" style="left:397px;top:578px">Actual Hours</div>
<div class="a rv" style="left:507px;top:562px">90.00</div>
<div class="a rv" style="left:507px;top:578px">100.50</div>
<div class="a rv" style="left:601px;top:562px">100.00</div>
<div class="a rv" style="left:601px;top:578px">90.50</div>
<div class="a rv" style="left:695px;top:562px">95.00</div>
<div class="a rv" style="left:695px;top:578px">105.50</div>
<div class="a rv" style="left:789px;top:562px">95.00</div>
<div class="a rv" style="left:789px;top:578px">95.50</div>
<div class="a rv" style="left:926px;top:578px">I</div>
<div class="a" style="left:185px;top:555px;width:697px;height:1px;background:#000"></div>
<div class="a" style="left:949px;top:555px;width:60px;height:1px;background:#000"></div>
<div class="a rl" style="left:289px;top:607px">Christine Ervine</div>
<div class="a rl" style="left:397px;top:607px">Allocated Hours</div>
<div class="a rl" style="left:397px;top:622px">Actual Hours</div>
<div class="a rv" style="left:507px;top:607px">105.75</div>
<div class="a rv" style="left:507px;top:622px">120.75</div>
<div class="a rv" style="left:601px;top:607px">100.75</div>
<div class="a rv" style="left:601px;top:622px">115.55</div>
<div class="a rv" style="left:695px;top:607px">110.75</div>
<div class="a rv" style="left:695px;top:622px">105.55</div>
<div class="a rv" style="left:789px;top:607px">120.75</div>
<div class="a rv" style="left:789px;top:622px">115.75</div>
<div class="a" style="left:185px;top:600px;width:697px;height:1px;background:#000"></div>
<div class="a" style="left:949px;top:600px;width:60px;height:1px;background:#000"></div>
<div class="a rl" style="left:289px;top:651px">David Lyle</div>
<div class="a rl" style="left:397px;top:651px">Allocated Hours</div>
<div class="a rl" style="left:397px;top:666px">Actual Hours</div>
<div class="a rv" style="left:507px;top:651px">110.00</div>
<div class="a rv" style="left:601px;top:651px">90.00</div>
<div class="a rv" style="left:695px;top:651px">105.00</div>
<div class="a rv" style="left:789px;top:651px">95.75</div>
<div class="a" style="left:185px;top:645px;width:697px;height:1px;background:#000"></div>
<div class="a" style="left:949px;top:645px;width:60px;height:1px;background:#000"></div>
<div class="a" style="left:389px;top:372px;width:1px;height:50px;background:#000"></div>
<div class="a" style="left:389px;top:422px;width:1px;height:87px;background:#000"></div>
<div class="a" style="left:389px;top:511px;width:1px;height:64px;background:#000"></div>
<div class="a" style="left:389px;top:578px;width:1px;height:65px;background:#000"></div>
<div class="a" style="left:389px;top:645px;width:1px;height:20px;background:#000"></div>
<!-- right vertical scrollbar -->
<div class="a" style="left:1005px;top:148px;width:17px;height:513px;background:linear-gradient(90deg,#F3F1EA,#FEFEFB 50%,#F3F1EA)"></div>
<div class="a sbb" style="left:1006px;top:149px;width:15px;height:15px"></div>
<svg class="a" style="left:1009px;top:153px" width="9" height="6"><path d="M1 5l3.5-3.5L8 5" fill="none" stroke="#4D6185" stroke-width="2"/></svg>
<div class="a sbb" style="left:1006px;top:228px;width:15px;height:193px"></div>
<div class="a" style="left:1010px;top:320px;width:7px;height:8px;background:repeating-linear-gradient(#EEF4FE 0 1px,#8CA6D8 1px 2px)"></div>
<div class="a sbb" style="left:1006px;top:644px;width:15px;height:15px"></div>
<svg class="a" style="left:1009px;top:649px" width="9" height="6"><path d="M1 1l3.5 3.5L8 1" fill="none" stroke="#4D6185" stroke-width="2"/></svg>
<div class="a" style="left:1005px;top:661px;width:17px;height:16px;background:#ECE9D8"></div>
<!-- horizontal scrollbar -->
<div class="a" style="left:170px;top:661px;width:835px;height:16px;background:linear-gradient(#F3F1EA,#FEFEFB 50%,#F3F1EA)"></div>
<div class="a sbb" style="left:173px;top:662px;width:15px;height:15px"></div>
<svg class="a" style="left:177px;top:665px" width="6" height="9"><path d="M5 1L1.5 4.5 5 8" fill="none" stroke="#4D6185" stroke-width="2"/></svg>
<div class="a sbb" style="left:190px;top:662px;width:285px;height:14px"></div>
<div class="a" style="left:328px;top:666px;width:8px;height:7px;background:repeating-linear-gradient(90deg,#EEF4FE 0 1px,#8CA6D8 1px 2px)"></div>
<div class="a sbb" style="left:989px;top:662px;width:15px;height:15px"></div>
<svg class="a" style="left:994px;top:665px" width="6" height="9"><path d="M1 1l3.5 3.5L1 8" fill="none" stroke="#4D6185" stroke-width="2"/></svg>

<!-- ticker -->
<div class="a" style="left:160px;top:677px;width:862px;height:20px;background:#E6E6F0;border-top:1px solid #fff"></div>
<div class="a" style="left:163px;top:680px;width:842px;overflow:hidden;font-size:11px;line-height:15px;letter-spacing:.93px;color:#0000EE">(monthly change) 0 NC .... Number of Completed Projects (monthly change) 0 NC .... .... Number of Completed Projects (monthly change) 0 NC ....</div>
<div class="a" style="left:1006px;top:679px;width:15px;height:16px;background:#F4F4F4;border:1px solid #8A8A8A;border-top-color:#fff;border-left-color:#fff;box-shadow:inset -1px -1px 0 #C8C8C8;font-weight:bold;font-size:12px;line-height:14px;text-align:center;color:#444">?</div>

<!-- in-page status -->
<div class="a" style="left:0;top:696px;width:1022px;height:19px;background:#F9F9FE;border-top:1px solid #E4E4E4;border-left:2px solid #6E6C64;border-bottom:1px solid #FFFFFF"></div><div class="a" style="left:0;top:696px;width:1px;height:19px;background:#ACA899"></div>
<div class="a" style="left:7px;top:700px;font-size:12px;line-height:14px;letter-spacing:-.05px">Joe Macnish</div>
<div class="a" style="left:100px;top:698px;width:1px;height:16px;background:#E0E0E0"></div>
<div class="a" style="left:252px;top:698px;width:1px;height:16px;background:#E0E0E0"></div>
<div class="a" style="left:573px;top:697px;width:1px;height:17px;background:#E0E0E0"></div>
<div class="a" style="left:579px;top:701px;font-size:11px;line-height:13px;letter-spacing:.3px">Log</div>
<svg class="a" style="left:605px;top:702px" width="10" height="7"><path d="M.5 5.5L4.5 .8l4 4.7z" fill="none" stroke="#A0A0A0"/></svg>
<div class="a" style="left:824px;top:698px;width:1px;height:16px;background:#E0E0E0"></div>
<svg class="a" style="left:830px;top:699px" width="16" height="14" viewBox="0 0 16 14"><path d="M4 .5h11v10H4z" fill="#D0D0C8" stroke="#9A9A90" stroke-width=".8"/><path d="M5.5 2h8v7h-8z" fill="#1A3ACA"/><path d="M9 3h4v5H9z" fill="#6A9AE8"/><path d="M7 12l2-1.5h3l2 1.5" fill="#B0B0A8"/><circle cx="3.5" cy="6" r="2.5" fill="#6A5040"/><path d="M3 6.5l1 2" stroke="#E05020" stroke-width="1"/><path d="M0 14c0-3 1.5-4.5 3.5-4.5S7 11 7 14z" fill="#8AB0D8"/></svg>
<svg class="a" style="left:853px;top:702px" width="10" height="7"><path d="M.5 5.5L4.5 .8l4 4.7z" fill="none" stroke="#A0A0A0"/></svg>
<div class="a" style="left:1022px;top:119px;width:2px;height:597px;background:#FAFAF8"></div>

<!-- IE status bar -->
<div class="a" style="left:0;top:715px;width:1024px;height:23px;background:#ECE9D8;border-top:1px solid #C8C4B0"></div>
<svg class="a" style="left:1px;top:719px" width="17" height="17"><use href="#ie"/></svg>
<div class="a t11" style="left:21px;top:722px">Done</div>
<div class="a vsep" style="left:748px;top:719px"></div>
<div class="a vsep" style="left:772px;top:719px"></div>
<div class="a vsep" style="left:796px;top:719px"></div>
<div class="a vsep" style="left:820px;top:719px"></div>
<div class="a vsep" style="left:845px;top:719px"></div>
<div class="a vsep" style="left:869px;top:719px"></div>
<svg class="a" style="left:875px;top:721px" width="14" height="14" viewBox="0 0 14 14"><circle cx="7" cy="7" r="6.3" fill="#1A3AD0" stroke="#0A1A40" stroke-width="1"/><path d="M3 2.5c2 .5 2.5 2 1.5 3.5S5 8 3.5 9L1.5 7.5C1.5 5 2 3.5 3 2.5zM8.5 1.5c2 .5 3.5 2 4 4l-3 2.5-1-2 1.5-1.5z" fill="#30D040"/><path d="M9 9.5l2.5-1-1 3z" fill="#30D040"/></svg>
<div class="a t11" style="left:893px;top:722px;letter-spacing:.3px">Internet</div>

<!-- Taskbar -->
<div class="a" style="left:0;top:738px;width:1024px;height:30px;background:linear-gradient(#3168D5 0%,#4A8CF6 8%,#2C6CE0 20%,#245EDB 50%,#2257D4 85%,#1941A5 100%)"></div>
<div class="a" style="left:0;top:738px;width:97px;height:30px;border-radius:0 12px 12px 0;background:linear-gradient(#3A8A3A 0%,#58B058 10%,#3C963C 30%,#358A35 70%,#2A742A 100%)"></div>
<svg class="a" style="left:10px;top:745px" width="21" height="19" viewBox="0 0 20 18"><path d="M2 3c2-1 4-1 7 1l-1.5 5.5C5 8 3 8 .8 9z" fill="#F1522B"/><path d="M10 4.5c2 1.3 4.5 1.3 7 0l-1.5 5.5c-2.4 1.2-4.8 1.2-7 0z" fill="#7DBA2F"/><path d="M.5 10c2-1 4.5-1 7 .5L6 16c-2.2-1.4-4.3-1.4-6.8-.4z" fill="#2F7CE0"/><path d="M8.3 11c2 1.3 4.5 1.3 7 0L14 16.5c-2.4 1.2-4.8 1.2-7 0z" fill="#FBC21E"/></svg>
<div class="a" style="left:34px;top:742px;font-weight:bold;font-style:italic;font-size:17px;line-height:22px;letter-spacing:.3px;color:#fff;text-shadow:1px 1px 1px #1A4A1A">start</div>
<div class="a" style="left:107px;top:743px;width:160px;height:23px;border-radius:3px;background:#1E4FB8;border:1px solid #173F9A;box-shadow:inset 1px 1px 0 #0E2E7A"></div>
<svg class="a" style="left:117px;top:745px" width="17" height="17"><use href="#ie"/></svg>
<div class="a t11" style="left:137px;top:748px;color:#fff">TrackerSuite.Net - Mi...</div>
<div class="a" style="left:931px;top:738px;width:93px;height:30px;background:linear-gradient(#1A8CEA 0%,#22A0F4 10%,#0E8AE8 50%,#0C7CDA 90%,#0A68C0 100%);border-left:1px solid #1A50A8"></div>
<svg class="a" style="left:922px;top:744px" width="19" height="19" viewBox="0 0 19 19"><defs><linearGradient id="chv" x1="0" y1="0" x2="1" y2="1"><stop offset="0" stop-color="#9CC0F8"/><stop offset=".5" stop-color="#3A8AEE"/><stop offset="1" stop-color="#1460E0"/></linearGradient></defs><circle cx="9.5" cy="9.5" r="8.7" fill="url(#chv)" stroke="#3A5A90" stroke-width="1"/><path d="M11.5 5.5L7.5 9.5l4 4" fill="none" stroke="#fff" stroke-width="2.2"/></svg>
<svg class="a" style="left:942px;top:745px" width="18" height="18" viewBox="0 0 18 18"><path d="M7 1h8v8H7z" fill="#D8E4F4" stroke="#8AA0C0" stroke-width=".6"/><path d="M8 2h6v6H8z" fill="#5A9AF0"/><ellipse cx="11" cy="12" rx="3" ry="1.5" fill="#E8F0F8"/><path d="M2 5h8v8H2z" fill="#D8E4F4" stroke="#8AA0C0" stroke-width=".6"/><path d="M3 6h6v6H3z" fill="#6AA6F4"/><ellipse cx="6" cy="16" rx="3.5" ry="1.6" fill="#F0F4FA"/><path d="M6 13v2" stroke="#D0D8E4" stroke-width="1.2"/></svg>
<div class="a t11" style="left:964px;top:747px;color:#fff">10:28 AM</div>

</body></html>
